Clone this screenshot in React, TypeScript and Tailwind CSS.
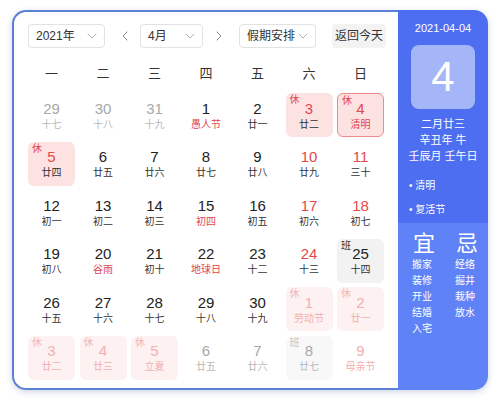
import { ChevronDown, ChevronLeft, ChevronRight } from "lucide-react";

type Day = {
  n: number;
  lunar: string;
  kind?: "rest" | "work";
  faded?: boolean; // outside the current month
  redNum?: boolean;
  redLunar?: boolean;
  today?: boolean;
};

const days: Day[] = [
  { n: 29, lunar: "十七", faded: true },
  { n: 30, lunar: "十八", faded: true },
  { n: 31, lunar: "十九", faded: true },
  { n: 1, lunar: "愚人节", redLunar: true },
  { n: 2, lunar: "廿一" },
  { n: 3, lunar: "廿二", kind: "rest", redNum: true },
  { n: 4, lunar: "清明", kind: "rest", redNum: true, redLunar: true, today: true },

  { n: 5, lunar: "廿四", kind: "rest", redNum: true },
  { n: 6, lunar: "廿五" },
  { n: 7, lunar: "廿六" },
  { n: 8, lunar: "廿七" },
  { n: 9, lunar: "廿八" },
  { n: 10, lunar: "廿九", redNum: true },
  { n: 11, lunar: "三十", redNum: true },

  { n: 12, lunar: "初一" },
  { n: 13, lunar: "初二" },
  { n: 14, lunar: "初三" },
  { n: 15, lunar: "初四", redLunar: true },
  { n: 16, lunar: "初五" },
  { n: 17, lunar: "初六", redNum: true },
  { n: 18, lunar: "初七", redNum: true },

  { n: 19, lunar: "初八" },
  { n: 20, lunar: "谷雨", redLunar: true },
  { n: 21, lunar: "初十" },
  { n: 22, lunar: "地球日", redLunar: true },
  { n: 23, lunar: "十二" },
  { n: 24, lunar: "十三", redNum: true },
  { n: 25, lunar: "十四", kind: "work" },

  { n: 26, lunar: "十五" },
  { n: 27, lunar: "十六" },
  { n: 28, lunar: "十七" },
  { n: 29, lunar: "十八" },
  { n: 30, lunar: "十九" },
  { n: 1, lunar: "劳动节", kind: "rest", faded: true, redNum: true, redLunar: true },
  { n: 2, lunar: "廿一", kind: "rest", faded: true, redNum: true },

  { n: 3, lunar: "廿二", kind: "rest", faded: true, redNum: true },
  { n: 4, lunar: "廿三", kind: "rest", faded: true, redNum: true },
  { n: 5, lunar: "立夏", kind: "rest", faded: true, redNum: true, redLunar: true },
  { n: 6, lunar: "廿五", faded: true },
  { n: 7, lunar: "廿六", faded: true },
  { n: 8, lunar: "廿七", kind: "work", faded: true },
  { n: 9, lunar: "母亲节", faded: true, redNum: true, redLunar: true },
];

const weekdays = ["一", "二", "三", "四", "五", "六", "日"];
const yi = ["搬家", "装修", "开业", "结婚", "入宅"];
const ji = ["经络", "掘井", "栽种", "放水"];

function Select({ label, width }: { label: string; width: string }) {
  return (
    <div
      className={`${width} h-6 flex items-center justify-between pl-[7px] pr-1 border border-[#e2e2e2] rounded text-[12px] text-[#333] whitespace-nowrap`}
    >
      <span>{label}</span>
      <ChevronDown className="w-4 h-4 shrink-0 text-[#b0b0b0]" strokeWidth={1.5} />
    </div>
  );
}

function Cell({ d }: { d: Day }) {
  let bg = "";
  if (d.kind === "rest") bg = d.faded ? "bg-[#fdf1f1]" : "bg-[#fde2e2]";
  if (d.kind === "work") bg = d.faded ? "bg-[#f8f8f8]" : "bg-[#f2f2f2]";
  const border = d.today ? "border border-[#ee8a8c]" : "";

  let num = "text-[#222]";
  if (d.faded) num = d.redNum ? "text-[#f2b0b0]" : "text-[#a8a8a8]";
  else if (d.redNum) num = "text-[#e4484e]";

  let lunar = "text-[#333]";
  if (d.faded) lunar = d.redLunar || d.redNum ? "text-[#f2b0b0]" : "text-[#b8b8b8]";
  else if (d.redLunar) lunar = "text-[#e0464c]";

  let tag = "";
  if (d.kind === "rest") tag = d.faded ? "text-[#f4b6b6]" : "text-[#e4484e]";
  if (d.kind === "work") tag = d.faded ? "text-[#c4c4c4]" : "text-[#333]";

  return (
    <div
      className={`relative h-[44px] rounded-md flex flex-col items-center justify-center ${bg} ${border}`}
    >
      {d.kind && (
        <span className={`absolute left-[4px] top-[2px] text-[10px] leading-none ${tag}`}>
          {d.kind === "rest" ? "休" : "班"}
        </span>
      )}
      <span className={`text-[15px] leading-[18px] ${num}`}>{d.n}</span>
      <span className={`text-[10px] leading-[13px] ${lunar}`}>{d.lunar}</span>
    </div>
  );
}

export default function App() {
  return (
    <div
      className="w-[500px] h-[402px] bg-white pt-[10px] pl-[12px]"
      style={{ fontFamily: '"Liberation Sans", "Noto Sans CJK SC", sans-serif' }}
    >
      <div className="w-[476px] h-[380px] flex rounded-[14px] shadow-[0_2px_6px_rgba(60,90,140,0.25)]">
        {/* calendar body */}
        <div className="w-[386px] h-full bg-white border-2 border-r-0 border-[#5c80d4] rounded-l-[14px] pt-[12px] pl-[13px]">
          <div className="flex items-center h-6">
            <Select label="2021年" width="w-[77px] ml-[1px]" />
            <ChevronLeft className="w-4 h-4 text-[#888] ml-[12px]" strokeWidth={1.5} />
            <Select label="4月" width="w-[63px] ml-[7px]" />
            <ChevronRight className="w-4 h-4 text-[#888] ml-[8px]" strokeWidth={1.5} />
            <Select label="假期安排" width="w-[77px] ml-[12px]" />
            <div className="ml-[16px] w-[54px] h-6 rounded bg-[#f3f3f3] text-[12px] text-[#333] flex items-center justify-center whitespace-nowrap">
              返回今天
            </div>
          </div>

          <div className="grid grid-cols-7 gap-x-[4.5px] w-[356px] mt-[14px] ml-[1px]">
            {weekdays.map((w) => (
              <div key={w} className="h-[24px] flex items-center justify-center text-[13px] text-[#333]">
                {w}
              </div>
            ))}
          </div>

          <div className="grid grid-cols-7 gap-x-[4.5px] gap-y-[4.5px] w-[356px] mt-[7px] ml-[1px]">
            {days.map((d, i) => (
              <Cell key={i} d={d} />
            ))}
          </div>
        </div>

        {/* side panel */}
        <div className="w-[90px] h-full rounded-r-[14px] overflow-hidden flex flex-col text-white">
          <div className="bg-[#4e6ef2] h-[213px] flex flex-col items-center pt-[11px]">
            <div className="text-[11px] leading-[14px]">2021-04-04</div>
            <div className="mt-[10px] w-[64px] h-[64px] rounded-lg bg-[#a4b6f7] flex items-center justify-center text-[42px] leading-none">
              4
            </div>
            <div className="mt-[7px] text-[11px] leading-[16px] text-center">
              <div>二月廿三</div>
              <div>辛丑年 牛</div>
              <div>壬辰月 壬午日</div>
            </div>
            <div className="self-start pl-[11px] mt-[10px] text-[10px] leading-[24px]">
              <div>• 清明</div>
              <div>• 复活节</div>
            </div>
          </div>
          <div className="flex-1 bg-[#5f82f6] flex pl-[14px] pt-[8px] gap-[20px]">
            <div className="flex flex-col items-start">
              <div className="text-[22px] leading-[26px] pl-[1px]">宜</div>
              {yi.map((t) => (
                <div key={t} className="text-[10px] leading-[16px]">
                  {t}
                </div>
              ))}
            </div>
            <div className="flex flex-col items-start">
              <div className="text-[22px] leading-[26px] pl-[1px]">忌</div>
              {ji.map((t) => (
                <div key={t} className="text-[10px] leading-[16px]">
                  {t}
                </div>
              ))}
            </div>
          </div>
        </div>
      </div>
    </div>
  );
}
